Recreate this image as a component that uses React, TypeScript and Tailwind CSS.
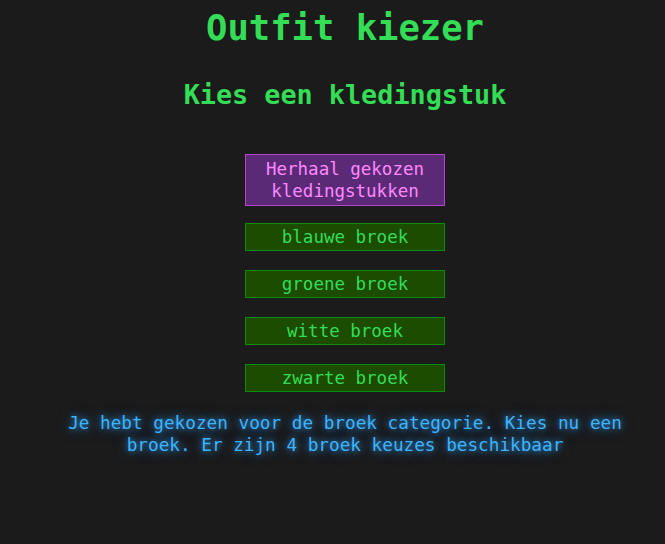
const choices = ["blauwe broek", "groene broek", "witte broek", "zwarte broek"];

export default function App() {
  return (
    <div className="min-h-[544px] w-full bg-[#1b1b1b] pl-[25px] flex flex-col items-center font-['DejaVu_Sans_Mono',monospace]">
      <h1 className="mt-[8px] text-[35.5px] leading-[40px] font-bold text-[#33dd55]">Outfit kiezer</h1>
      <h2 className="mt-[32px] text-[26.8px] leading-[30px] font-bold text-[#33dd55]">Kies een kledingstuk</h2>

      <div className="mt-[44px] flex flex-col items-center">
        <button className="w-[200px] h-[52px] border border-[#b346c8] bg-[#5b2a76] text-[#ff88ff] text-[17.5px] leading-[22px] text-center">
          Herhaal gekozen kledingstukken
        </button>
        <div className="mt-[17px] flex flex-col gap-[19px]">
          {choices.map((c) => (
            <button
              key={c}
              className="w-[200px] h-[28px] border border-[#0b8a0b] bg-[#1c4c00] text-[#33dd55] text-[17.5px] leading-[22px] text-center"
            >
              {c}
            </button>
          ))}
        </div>
      </div>

      <p className="mt-[20px] w-[590px] text-center text-[17.7px] leading-[22px] text-[#3db4ff] [text-shadow:0_0_6px_rgba(51,170,255,0.8),0_0_14px_rgba(51,170,255,0.5)]">
        Je hebt gekozen voor de broek categorie. Kies nu een broek. Er zijn 4 broek keuzes beschikbaar
      </p>
    </div>
  );
}
